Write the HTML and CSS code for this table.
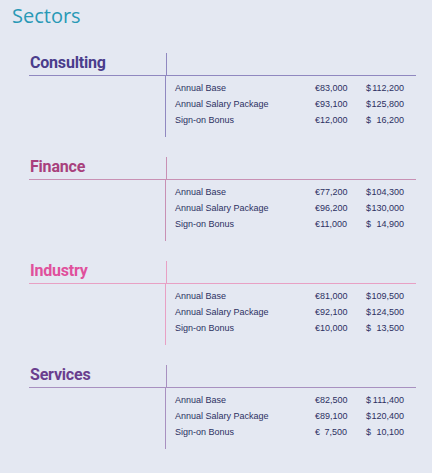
FILE: index.html
```html
<!DOCTYPE html>
<html>
<head>
<meta charset="utf-8">
<link rel="stylesheet" href="styles.css">
</head>
<body>
<h1 class="title">Sectors</h1>
<div class="sectors">
  <section class="sector consulting">
    <div class="sector-head"><h2 class="sector-name">Consulting</h2><div class="head-gap"></div></div>
    <div class="sector-body">
      <div class="row"><span class="label">Annual Base</span><span class="eur"><span>€</span><span>83,000</span></span><span class="usd"><span>$</span><span>112,200</span></span></div>
      <div class="row"><span class="label">Annual Salary Package</span><span class="eur"><span>€</span><span>93,100</span></span><span class="usd"><span>$</span><span>125,800</span></span></div>
      <div class="row"><span class="label">Sign-on Bonus</span><span class="eur"><span>€</span><span>12,000</span></span><span class="usd"><span>$</span><span>16,200</span></span></div>
    </div>
  </section>
  <section class="sector finance">
    <div class="sector-head"><h2 class="sector-name">Finance</h2><div class="head-gap"></div></div>
    <div class="sector-body">
      <div class="row"><span class="label">Annual Base</span><span class="eur"><span>€</span><span>77,200</span></span><span class="usd"><span>$</span><span>104,300</span></span></div>
      <div class="row"><span class="label">Annual Salary Package</span><span class="eur"><span>€</span><span>96,200</span></span><span class="usd"><span>$</span><span>130,000</span></span></div>
      <div class="row"><span class="label">Sign-on Bonus</span><span class="eur"><span>€</span><span>11,000</span></span><span class="usd"><span>$</span><span>14,900</span></span></div>
    </div>
  </section>
  <section class="sector industry">
    <div class="sector-head"><h2 class="sector-name">Industry</h2><div class="head-gap"></div></div>
    <div class="sector-body">
      <div class="row"><span class="label">Annual Base</span><span class="eur"><span>€</span><span>81,000</span></span><span class="usd"><span>$</span><span>109,500</span></span></div>
      <div class="row"><span class="label">Annual Salary Package</span><span class="eur"><span>€</span><span>92,100</span></span><span class="usd"><span>$</span><span>124,500</span></span></div>
      <div class="row"><span class="label">Sign-on Bonus</span><span class="eur"><span>€</span><span>10,000</span></span><span class="usd"><span>$</span><span>13,500</span></span></div>
    </div>
  </section>
  <section class="sector services">
    <div class="sector-head"><h2 class="sector-name">Services</h2><div class="head-gap"></div></div>
    <div class="sector-body">
      <div class="row"><span class="label">Annual Base</span><span class="eur"><span>€</span><span>82,500</span></span><span class="usd"><span>$</span><span>111,400</span></span></div>
      <div class="row"><span class="label">Annual Salary Package</span><span class="eur"><span>€</span><span>89,100</span></span><span class="usd"><span>$</span><span>120,400</span></span></div>
      <div class="row"><span class="label">Sign-on Bonus</span><span class="eur"><span>€</span><span>7,500</span></span><span class="usd"><span>$</span><span>10,100</span></span></div>
    </div>
  </section>
</div>
</body>
</html>
```
FILE: styles.css
```css
html, body {
  margin: 0;
  padding: 0;
  background: #e4e8f2;
}
body {
  font-family: "Liberation Sans", Arial, sans-serif;
  width: 432px;
  height: 473px;
  overflow: hidden;
}
.title {
  margin: 0;
  padding: 4px 0 0 12px;
  font-family: "Open Sans", "Liberation Sans", sans-serif;
  font-size: 20px;
  line-height: 24px;
  font-weight: normal;
  color: #2899b6;
}
.sectors {
  margin-top: 25px;
  padding-left: 29px;
  display: flex;
  flex-direction: column;
  gap: 20px;
}
.sector {
  width: 387px;
}
.sector-head {
  display: flex;
  height: 22px;
  border-bottom: 1px solid var(--line);
}
.sector-name {
  margin: 0;
  width: 136px;
  font-family: Roboto, "Liberation Sans", sans-serif;
  font-size: 16px;
  line-height: 19px;
  font-weight: bold;
  letter-spacing: -0.2px;
  color: var(--ink);
  padding-left: 1px;
}
.head-gap {
  flex: 1;
  border-left: 1px solid var(--line);
}
.sector-body {
  margin-left: 136px;
  border-left: 1px solid var(--line);
  padding: 4px 0 9px 9px;
}
.row {
  display: grid;
  grid-template-columns: 140px 32px 57px;
  font-size: 9px;
  line-height: 16px;
  color: #2c3062;
}
.usd {
  padding-left: 19px;
}
.eur, .usd {
  display: flex;
  justify-content: space-between;
}
.consulting { --ink: #4a3d8c; --line: #9088c0; }
.finance { --ink: #a8407c; --line: #c890b4; }
.industry { --ink: #e0509c; --line: #e8a0c4; }
.services { --ink: #6a3e8e; --line: #a890c0; }
```
